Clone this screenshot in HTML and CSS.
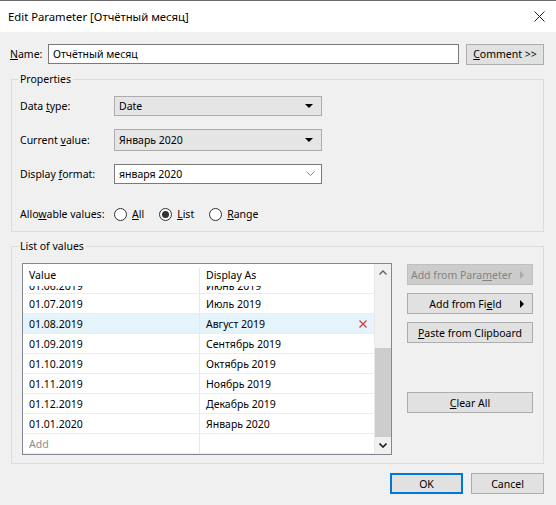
FILE: index.html
```html
<!DOCTYPE html>
<html lang="en">
<head>
    <meta charset="UTF-8">
    <title>Edit Parameter</title>
    <link rel="stylesheet" href="styles.css">
</head>
<body>
    <div class="window">
        <div class="titlebar">
            <span>Edit Parameter [Отчётный месяц]</span>
            <svg class="close" width="11" height="11" viewBox="0 0 11 11">
                <path d="M0.5 0.5 L10.5 10.5 M10.5 0.5 L0.5 10.5" stroke="#222" stroke-width="1" fill="none"/>
            </svg>
        </div>

        <div class="content">
            <div class="name-row">
                <label class="name-label"><u>N</u>ame:</label>
                <div class="text-input">Отчётный месяц</div>
                <button class="btn comment-btn"><u>C</u>omment &gt;&gt;</button>
            </div>

            <fieldset class="group props">
                <legend>Properties</legend>
                <div class="prop-row">
                    <span class="prop-label">Data <u>t</u>ype:</span>
                    <div class="combo">Date <span class="tri"></span></div>
                </div>
                <div class="prop-row row-current">
                    <span class="prop-label">Current <u>v</u>alue:</span>
                    <div class="combo tall">Январь 2020 <span class="tri"></span></div>
                </div>
                <div class="prop-row row-format">
                    <span class="prop-label">Display <u>f</u>ormat:</span>
                    <div class="combo editable">января 2020
                        <svg width="9" height="6" viewBox="0 0 9 6"><path d="M0.5 0.5 L4.5 4.5 L8.5 0.5" stroke="#888" fill="none"/></svg>
                    </div>
                </div>
                <div class="prop-row row-allow">
                    <span class="prop-label">Allo<u>w</u>able values:</span>
                    <span class="radio"><span class="dot"></span><u>A</u>ll</span>
                    <span class="radio"><span class="dot on"></span><u>L</u>ist</span>
                    <span class="radio"><span class="dot"></span><u>R</u>ange</span>
                </div>
            </fieldset>

            <fieldset class="group values">
                <legend>List of values</legend>
                <div class="values-body">
                    <div class="table">
                        <div class="list">
                            <div class="row head">
                                <div class="cell">Value</div>
                                <div class="cell">Display As</div>
                            </div>
                            <div class="row clipped">
                                <div class="clip-inner">
                                    <div class="cell">01.06.2019</div>
                                    <div class="cell">Июнь 2019</div>
                                </div>
                            </div>
                            <div class="row"><div class="cell">01.07.2019</div><div class="cell">Июль 2019</div></div>
                            <div class="row selected">
                                <div class="cell">01.08.2019</div>
                                <div class="cell">Август 2019
                                    <svg class="del" width="8" height="8" viewBox="0 0 8 8"><path d="M0.5 0.5 L7.5 7.5 M7.5 0.5 L0.5 7.5" stroke="#d2473a" stroke-width="1.4" fill="none"/></svg>
                                </div>
                            </div>
                            <div class="row"><div class="cell">01.09.2019</div><div class="cell">Сентябрь 2019</div></div>
                            <div class="row"><div class="cell">01.10.2019</div><div class="cell">Октябрь 2019</div></div>
                            <div class="row"><div class="cell">01.11.2019</div><div class="cell">Ноябрь 2019</div></div>
                            <div class="row"><div class="cell">01.12.2019</div><div class="cell">Декабрь 2019</div></div>
                            <div class="row"><div class="cell">01.01.2020</div><div class="cell">Январь 2020</div></div>
                            <div class="row add"><div class="cell">Add</div><div class="cell"></div></div>
                        </div>
                        <div class="scrollbar">
                            <div class="arrow">
                                <svg width="8" height="5" viewBox="0 0 8 5"><path d="M0.5 4.5 L4 1 L7.5 4.5" stroke="#606060" stroke-width="1.3" fill="none"/></svg>
                            </div>
                            <div class="track"></div>
                            <div class="thumb"></div>
                            <div class="arrow">
                                <svg width="8" height="5" viewBox="0 0 8 5"><path d="M0.5 0.5 L4 4 L7.5 0.5" stroke="#222" stroke-width="1.6" fill="none"/></svg>
                            </div>
                        </div>
                    </div>

                    <div class="side-buttons">
                        <button class="btn side disabled has-sub">Add from Para<u>m</u>eter <span class="sub"></span></button>
                        <button class="btn side has-sub">Add from Fi<u>e</u>ld <span class="sub"></span></button>
                        <button class="btn side"><u>P</u>aste from Clipboard</button>
                        <button class="btn side clear"><u>C</u>lear All</button>
                    </div>
                </div>
            </fieldset>

            <div class="footer">
                <button class="btn ok">OK</button>
                <button class="btn">Cancel</button>
            </div>
        </div>
    </div>
</body>
</html>
```

FILE: styles.css
```css
* {
    box-sizing: border-box;
}

body {
    margin: 0;
    font-family: "Noto Sans", "Open Sans", sans-serif;
    font-size: 10.5px;
    color: #000;
    background-color: #f0f0f0;
}

.window {
    width: 556px;
    height: 505px;
    background-color: #f0f0f0;
}

.titlebar {
    height: 32px;
    background-color: #fff;
    border-top: 1px solid #6b6b6b;
    display: flex;
    align-items: center;
    justify-content: space-between;
    padding: 0 11px 0 8px;
    font-size: 11.3px;
}

.content {
    padding: 12px 12px 0 10px;
}

u {
    text-underline-offset: 1px;
}

/* name row */

.name-row {
    display: flex;
    align-items: center;
    height: 20px;
}

.name-label {
    width: 38px;
}

.text-input {
    width: 411px;
    height: 20px;
    background-color: #fff;
    border: 1px solid #7a7a7a;
    padding-left: 4px;
    display: flex;
    align-items: center;
}

.btn {
    font-family: inherit;
    font-size: 10.5px;
    color: #000;
    background-color: #e1e1e1;
    border: 1px solid #adadad;
    height: 21px;
    padding: 0;
    display: flex;
    align-items: center;
    justify-content: center;
}

.comment-btn {
    margin-left: 7px;
    width: 78px;
}

/* group boxes */

.group {
    margin: 8px 0 0 1px;
    width: 533px;
    border: 1px solid #dcdcdc;
    padding: 0 8px;
}

.group legend {
    padding: 0 2px;
    margin-left: -2px;
    line-height: 15px;
}

.props {
    padding-top: 9px;
    padding-bottom: 9px;
}

.prop-row {
    display: flex;
    align-items: center;
}

.prop-label {
    width: 94px;
}

.combo {
    width: 208px;
    height: 20px;
    background-color: #e5e5e5;
    border: 1px solid #acacac;
    padding: 0 8px 0 4px;
    display: flex;
    align-items: center;
    justify-content: space-between;
}

.combo.tall {
    height: 22px;
}

.combo.editable {
    background-color: #fff;
    border-color: #7a7a7a;
    padding-right: 6px;
}

.tri {
    width: 0;
    height: 0;
    border-left: 4px solid transparent;
    border-right: 4px solid transparent;
    border-top: 4px solid #000;
}

.row-current,
.row-format {
    margin-top: 13px;
}

.row-allow {
    margin-top: 22px;
    height: 16px;
}

.radio {
    display: flex;
    align-items: center;
    margin-right: 15px;
}

.dot {
    width: 13px;
    height: 13px;
    border-radius: 50%;
    border: 1px solid #333;
    background-color: #fff;
    margin-right: 5px;
    display: flex;
    align-items: center;
    justify-content: center;
}

.dot.on::after {
    content: "";
    width: 7px;
    height: 7px;
    border-radius: 50%;
    background-color: #333;
}

/* list of values */

.values {
    margin-top: 7px;
    padding: 9px 0 8px 10px;
}

.values legend {
    margin-left: -4px;
}

.values-body {
    display: flex;
    align-items: flex-start;
}

.table {
    width: 370px;
    height: 192px;
    border: 1px solid #828790;
    background-color: #fff;
    display: flex;
}

.list {
    flex: 1;
    border-right: 1px solid #e8e8e8;
}

.row {
    display: grid;
    grid-template-columns: 177px 1fr;
    height: 20px;
    border-bottom: 1px solid #ececec;
}

.row .cell {
    padding-left: 6px;
    display: flex;
    align-items: center;
}

.row .cell:first-child {
    border-right: 1px solid #e8e8e8;
}

.row.head {
    border-bottom: none;
    height: 22px;
    padding-top: 4px;
}

.row.head .cell {
    align-items: flex-start;
    line-height: 14px;
}

.row.clipped {
    display: block;
    height: 8px;
    overflow: hidden;
}

.clip-inner {
    display: grid;
    grid-template-columns: 177px 1fr;
    height: 19px;
    margin-top: -10px;
}

.row.selected {
    background-color: #e5f3fb;
}

.row.selected .cell:last-child {
    justify-content: space-between;
    padding-right: 7px;
}

.row.add .cell:first-child {
    color: #8c8c8c;
}

.scrollbar {
    width: 16px;
    background-color: #f0f0f0;
    display: flex;
    flex-direction: column;
}

.arrow {
    height: 17px;
    display: flex;
    align-items: center;
    justify-content: center;
}

.track {
    height: 67px;
}

.thumb {
    height: 89px;
    background-color: #cdcdcd;
}

.side-buttons {
    margin-left: 15px;
    display: flex;
    flex-direction: column;
    gap: 8px;
    padding-top: 1px;
}

.btn.side {
    width: 126px;
}

.btn.has-sub {
    position: relative;
    padding-right: 9px;
}

.btn.has-sub .sub {
    position: absolute;
    right: 8px;
    top: 6px;
    width: 0;
    height: 0;
    border-top: 4px solid transparent;
    border-bottom: 4px solid transparent;
    border-left: 4px solid #000;
}

.btn.side.disabled {
    background-color: #cccccc;
    border-color: #bfbfbf;
    color: #838383;
    padding-right: 17px;
}

.btn.side.disabled .sub {
    border-left-color: #a8a8a8;
}

.btn.side.clear {
    margin-top: 41px;
}

.footer {
    display: flex;
    justify-content: flex-end;
    gap: 8px;
    margin-top: 9px;
}

.footer .btn {
    width: 73px;
}

.btn.ok {
    border: 2px solid #0078d7;
}
```
